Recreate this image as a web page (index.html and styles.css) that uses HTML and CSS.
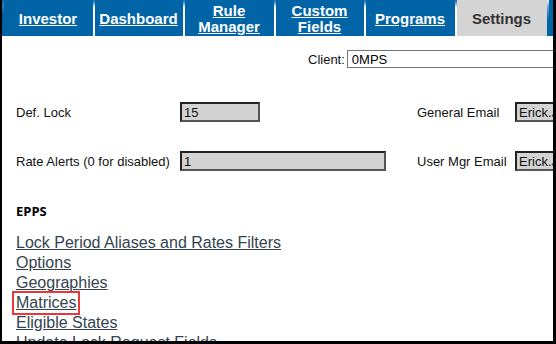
FILE: index.html
```html
<!DOCTYPE html>
<html>
<head>
    <title>Settings</title>
    <link rel="stylesheet" href="styles.css">
</head>
<body>
<div class="frame">
    <div class="tabs">
        <a class="tab" href="#"><span>Investor</span></a>
        <a class="tab" href="#"><span>Dashboard</span></a>
        <a class="tab" href="#"><span>Rule<br>Manager</span></a>
        <a class="tab" href="#"><span>Custom<br>Fields</span></a>
        <a class="tab" href="#"><span>Programs</span></a>
        <a class="tab active" href="#"><span>Settings</span></a>
        <div class="tab-end"></div>
    </div>

    <div class="client-row">
        <label for="client">Client:</label>
        <input type="text" id="client" class="client" value="0MPS">
    </div>

    <div class="settings">
        <div class="row">
            <label class="lbl">Def. Lock</label>
            <div class="cell"><input type="text" class="box short" value="15"></div>
            <label class="lbl2">General Email</label>
            <input type="text" class="box email" value="Erick.Johnson@example.com">
        </div>
        <div class="row">
            <label class="lbl">Rate Alerts (0 for disabled)</label>
            <div class="cell"><input type="text" class="box long" value="1"></div>
            <label class="lbl2">User Mgr Email</label>
            <input type="text" class="box email" value="Erick.Johnson@example.com">
        </div>
    </div>

    <h4 class="section">EPPS</h4>
    <ul class="links">
        <li><a href="#">Lock Period Aliases and Rates Filters</a></li>
        <li><a href="#">Options</a></li>
        <li><a href="#">Geographies</a></li>
        <li><a href="#" class="marked">Matrices</a></li>
        <li><a href="#">Eligible States</a></li>
        <li><a href="#">Update Lock Request Fields</a></li>
    </ul>
</div>
</body>
</html>
```

FILE: styles.css
```css
body {
    margin: 0;
    font-family: "Liberation Sans", Arial, sans-serif;
    font-size: 13px;
    color: #111;
    background-color: #fff;
}
.frame {
    width: 551px;
    height: 341px;
    border-left: 2px solid #000;
    border-right: 3px solid #000;
    border-bottom: 3px solid #000;
    overflow: hidden;
}
.tabs {
    display: flex;
    height: 36px;
    background-color: #0064a6;
}
.tab {
    width: 88px;
    flex-shrink: 0;
    display: flex;
    align-items: center;
    justify-content: center;
    text-align: center;
    font-weight: bold;
    font-size: 15px;
    line-height: 16px;
    color: #fff;
    text-decoration: none;
    border-left: 2px solid #fff;
    border-image: linear-gradient(to bottom, #0064a6 0px, #6a9ccd 4px, #fff 8px) 1;
    padding-top: 1px;
    margin-left: 0.5px;
}
.tab:first-child {
    border-image: linear-gradient(to bottom, #0064a6 0px, #3a7cbc 6px, #0a5c9a 14px, #0064a6 36px) 1;
    margin-left: 0;
}
.tab span {
    text-decoration: underline;
}
.tab.active {
    background-color: #d4d4d4;
    color: #333;
    width: 90px;
}
.tab.active span {
    text-decoration: none;
}
.tab-end {
    flex: 1;
    border-left: 2px solid #fff;
    border-image: linear-gradient(to bottom, #fff 0px, #6a9ccd 8px, #0064a6 20px) 1;
}
.client-row {
    display: flex;
    align-items: center;
    margin-top: 14px;
    padding-left: 306px;
    gap: 2px;
}
.client {
    width: 300px;
    height: 18px;
    box-sizing: border-box;
    border: 1px solid #767676;
    font-family: "Liberation Sans", Arial, sans-serif;
    font-size: 13px;
    padding: 0 4px;
    flex-shrink: 0;
}
.settings {
    margin-top: 34px;
    display: flex;
    flex-direction: column;
    gap: 29px;
}
.row {
    display: flex;
    align-items: center;
    padding-left: 14px;
}
.lbl {
    width: 164px;
    flex-shrink: 0;
}
.cell {
    width: 237px;
    flex-shrink: 0;
}
.lbl2 {
    width: 98px;
    flex-shrink: 0;
}
.box {
    height: 20px;
    box-sizing: border-box;
    background-color: #d3d3d3;
    border: 2px solid #555;
    border-top-color: #222;
    border-left-color: #222;
    font-family: "Liberation Sans", Arial, sans-serif;
    font-size: 13px;
    color: #111;
    padding: 0 2px;
}
.short {
    width: 80px;
}
.long {
    width: 206px;
}
.email {
    width: 200px;
    flex-shrink: 0;
}
.section {
    margin: 31px 0 0 14px;
    font-size: 13px;
    font-weight: bold;
    font-family: "Open Sans", "Liberation Sans", sans-serif;
    color: #000;
}
.links {
    list-style: none;
    margin: 13px 0 0 14px;
    padding: 0;
}
.links li {
    height: 20px;
    line-height: 20px;
}
.links a {
    font-size: 16px;
    color: #34434f;
    text-decoration: underline;
}
.marked {
    outline: 2px solid #e8383d;
    outline-offset: 1px;
    padding: 0 1px 1px 1px;
    margin-left: -1px;
}
```
